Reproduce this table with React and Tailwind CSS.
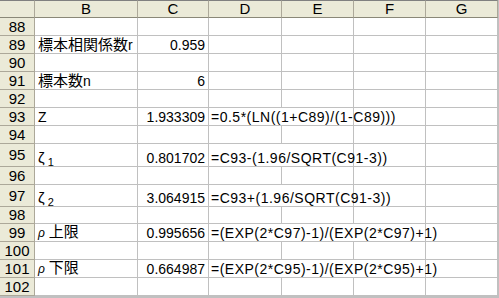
const cols = ['B', 'C', 'D', 'E', 'F', 'G'];

const rows = [
  { n: 88, h: 'h-[18px]' },
  { n: 89, h: 'h-[18px]', label: <span className="text-[15px]">標本相関係数<span className="text-[14px]">r</span></span>, value: '0.959' },
  { n: 90, h: 'h-[18px]' },
  { n: 91, h: 'h-[18px]', label: <span className="text-[15px]">標本数<span className="text-[14px]">n</span></span>, value: '6' },
  { n: 92, h: 'h-[18px]' },
  { n: 93, h: 'h-[18px]', label: 'Z', value: '1.933309', formula: '=0.5*(LN((1+C89)/(1-C89)))', span: 2 },
  { n: 94, h: 'h-[18px]' },
  { n: 95, h: 'h-[23px]', label: <span className="text-[15px]">ζ<sub className="ml-[3px] text-[11px]">1</sub></span>, value: '0.801702', formula: '=C93-(1.96/SQRT(C91-3))', span: 2 },
  { n: 96, h: 'h-[18px]' },
  { n: 97, h: 'h-[22px]', label: <span className="text-[15px]">ζ<sub className="ml-[3px] text-[11px]">2</sub></span>, value: '3.064915', formula: '=C93+(1.96/SQRT(C91-3))', span: 2 },
  { n: 98, h: 'h-[17px]' },
  { n: 99, h: 'h-[18px]', label: <span><span className="text-[12px] italic">ρ</span> <span className="text-[15px]">上限</span></span>, value: '0.995656', formula: '=(EXP(2*C97)-1)/(EXP(2*C97)+1)', span: 3 },
  { n: 100, h: 'h-[18px]' },
  { n: 101, h: 'h-[18px]', label: <span><span className="text-[12px] italic">ρ</span> <span className="text-[15px]">下限</span></span>, value: '0.664987', formula: '=(EXP(2*C95)-1)/(EXP(2*C95)+1)', span: 3 },
  { n: 102, h: 'h-[18px]' },
];

const cell = 'border-r border-b border-[#c0c0c0] flex items-end bg-white';

function Row({ r }) {
  const rest = r.formula ? cols.slice(2 + r.span) : cols.slice(2);
  return (
    <>
      <div className={`${r.h} bg-[#ebead8] border-r border-b border-[#aca899] flex items-center justify-center text-[15px]`}>{r.n}</div>
      <div className={`${cell} pl-[3px] whitespace-nowrap`}>{r.label}</div>
      <div className={`${cell} justify-end pr-[3px]`}>{r.value}</div>
      {r.formula && (
        <div className={`${cell} pl-[2px] whitespace-nowrap ${r.span === 3 ? 'col-span-3' : 'col-span-2'}`}>
          <span className="relative z-10 tracking-[0.5px]">{r.formula}</span>
        </div>
      )}
      {rest.map((c) => (
        <div key={c} className={cell} />
      ))}
    </>
  );
}

export default function App() {
  return (
    <div className="w-[499px] h-[298px] overflow-hidden bg-[#c0c0c0] font-['Liberation_Sans','Noto_Sans_CJK_JP',sans-serif] text-[14px] leading-[16px] text-black">
      <div className="grid grid-cols-[35px_103px_71px_73px_72px_72px_72px]">
        <div className="h-[18px] bg-[#ebead8] border-t border-r border-b border-t-[#808080] border-[#aca899] border-b-[#8a8878]" />
        {cols.map((c) => (
          <div key={c} className="h-[18px] bg-[#ebead8] border-t border-t-[#808080] border-r border-r-[#aca899] border-b border-b-[#8a8878] flex items-center justify-center text-[15px]">{c}</div>
        ))}
        {rows.map((r) => (
          <Row key={r.n} r={r} />
        ))}
      </div>
    </div>
  );
}
